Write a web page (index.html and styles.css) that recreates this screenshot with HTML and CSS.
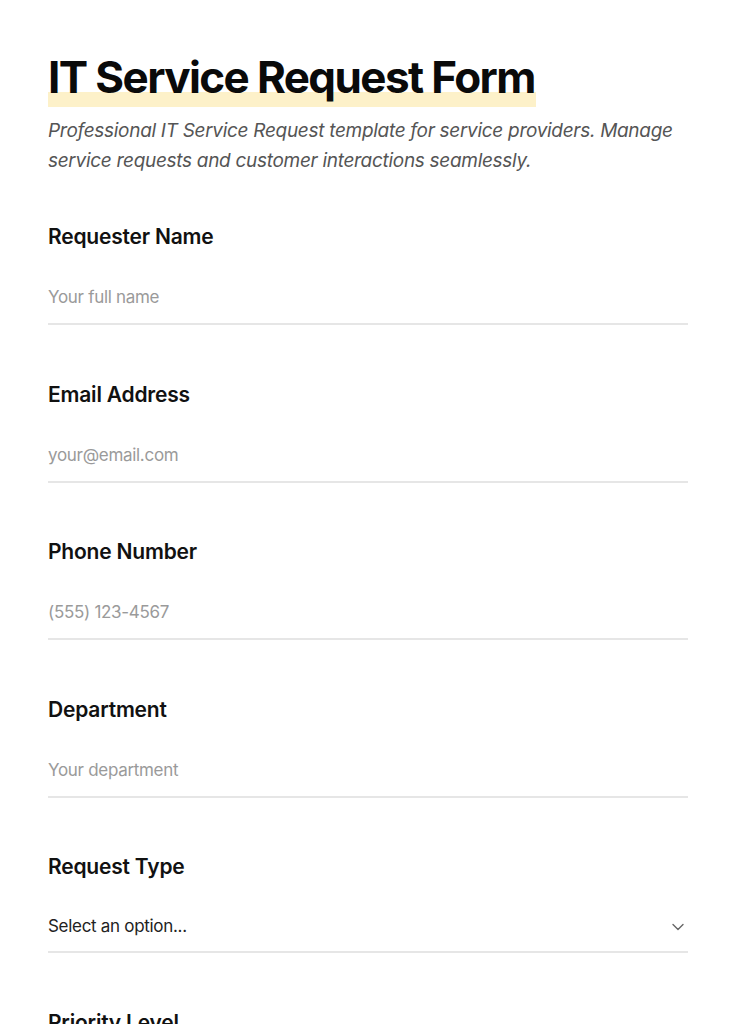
FILE: index.html
```html
<!DOCTYPE html>
<html lang="en">
<head>
<meta charset="utf-8">
<title>IT Service Request Form</title>
<link rel="stylesheet" href="styles.css">
</head>
<body>
<main class="page">
  <header class="intro">
    <h1 class="title">IT Service Request Form</h1>
    <p class="subtitle">Professional IT Service Request template for service providers. Manage service requests and customer interactions seamlessly.</p>
  </header>
  <form class="form">
    <div class="field">
      <label class="label" for="name">Requester Name</label>
      <input class="input" id="name" type="text" placeholder="Your full name">
    </div>
    <div class="field">
      <label class="label" for="email">Email Address</label>
      <input class="input" id="email" type="email" placeholder="your@email.com">
    </div>
    <div class="field">
      <label class="label" for="phone">Phone Number</label>
      <input class="input" id="phone" type="tel" placeholder="(555) 123-4567">
    </div>
    <div class="field">
      <label class="label" for="dept">Department</label>
      <input class="input" id="dept" type="text" placeholder="Your department">
    </div>
    <div class="field">
      <label class="label" for="type">Request Type</label>
      <div class="select-wrap">
        <select class="input select" id="type">
          <option>Select an option...</option>
        </select>
        <svg class="chevron" width="12" height="8" viewBox="0 0 12 8" aria-hidden="true"><path d="M1 1.5 6 6.5 11 1.5" fill="none" stroke="#666" stroke-width="1.4" stroke-linecap="round" stroke-linejoin="round"/></svg>
      </div>
    </div>
    <div class="field">
      <label class="label" for="priority">Priority Level</label>
      <div class="select-wrap">
        <select class="input select" id="priority">
          <option>Select an option...</option>
        </select>
        <svg class="chevron" width="12" height="8" viewBox="0 0 12 8" aria-hidden="true"><path d="M1 1.5 6 6.5 11 1.5" fill="none" stroke="#666" stroke-width="1.4" stroke-linecap="round" stroke-linejoin="round"/></svg>
      </div>
    </div>
  </form>
</main>
</body>
</html>
```
FILE: styles.css
```css
* { box-sizing: border-box; }
html, body { margin: 0; padding: 0; background: #fff; }
body {
  font-family: "Inter", "Liberation Sans", sans-serif;
  color: #111;
}
.page {
  padding: 52px 48px 0;
  width: 736px;
}
.intro {
  display: flex;
  flex-direction: column;
  align-items: flex-start;
  margin-bottom: 46px;
}
.title {
  margin: 0;
  padding: 0 1px 5px 0;
  font-size: 44px;
  line-height: 50px;
  font-weight: 700;
  letter-spacing: -1.6px;
  color: #0a0a0a;
  background: linear-gradient(to bottom, transparent calc(100% - 15px), #fdf1c9 calc(100% - 15px));
}
.subtitle {
  margin: 9px 0 0;
  font-size: 19px;
  line-height: 30px;
  font-style: italic;
  color: #555;
  letter-spacing: -0.3px;
}
.form { display: flex; flex-direction: column; gap: 54.5px; }
.field { display: flex; flex-direction: column; gap: 20px; }
.label {
  font-size: 21px;
  line-height: 29px;
  font-weight: 600;
  color: #111;
  letter-spacing: -0.2px;
}
.input {
  display: block;
  width: 100%;
  border: 0;
  border-bottom: 2px solid #e6e6e6;
  padding: 13px 0;
  font-family: inherit;
  font-size: 17px;
  line-height: 26px;
  height: 54px;
  color: #222;
  background: transparent;
  outline: none;
  letter-spacing: -0.3px;
}
.input::placeholder { color: #9a9a9a; }
.select-wrap { position: relative; }
.select {
  appearance: none;
  -webkit-appearance: none;
  border-radius: 0;
  height: 52px;
  padding: 12px 0;
}
.chevron {
  position: absolute;
  right: 4px;
  top: 22px;
  pointer-events: none;
}
```
